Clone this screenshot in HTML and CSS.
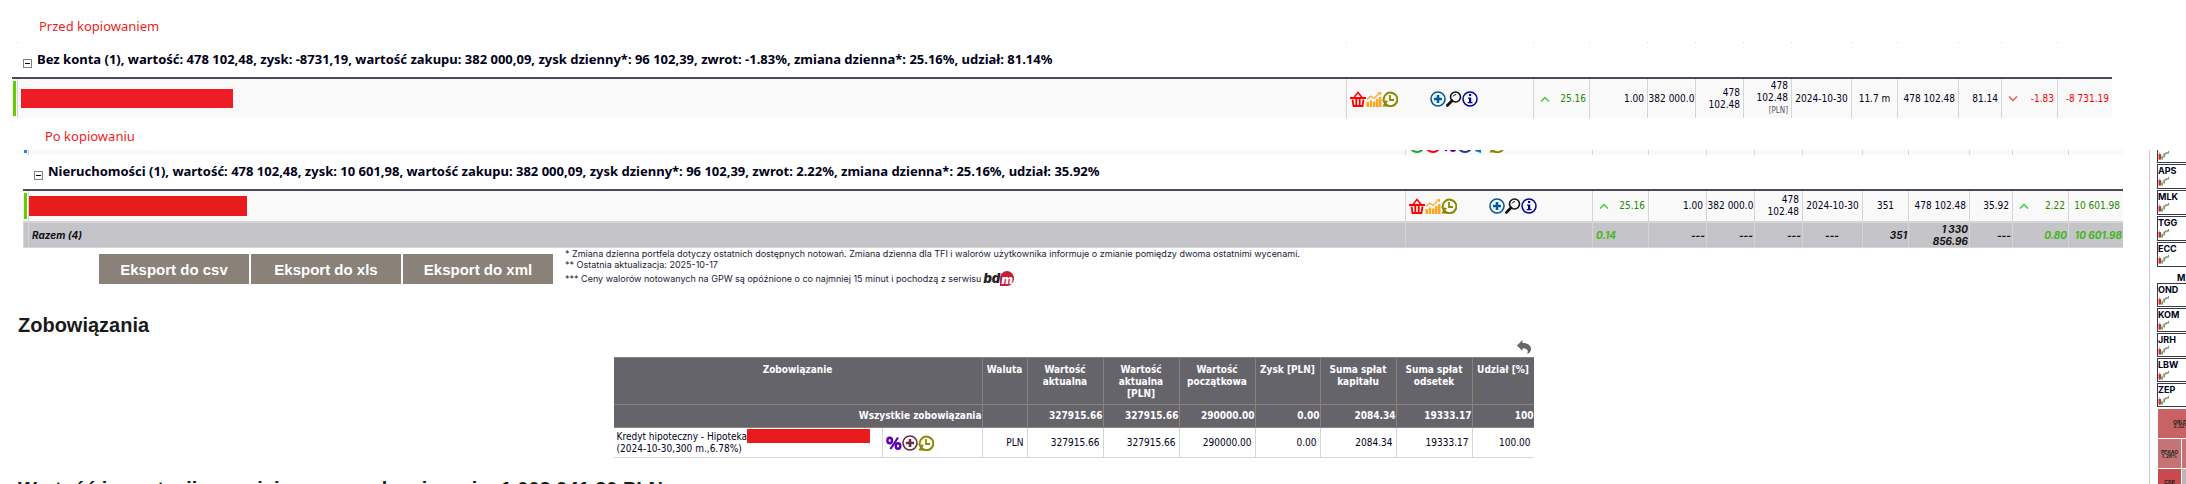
FILE: index.html
```html
<!DOCTYPE html>
<html lang="pl">
<head>
<meta charset="UTF-8">
<meta name="viewport" content="width=device-width, initial-scale=1.0">
<title>Portfel</title>
<link rel="stylesheet" href="styles.css">
</head>
<body>

<!-- Ikony -->
<svg class="sprite" aria-hidden="true">
    <symbol id="koszyk" viewBox="0 0 16 16">
        <path d="M3.500 7L8 1.500 12.500 7" fill="none" stroke="#f00" stroke-width="1.500"/>
        <path d="M0 6h16v2H0z" fill="#f00"/>
        <path d="M2.500 8.500l1 6.500h9l1-6.500M6.300 8v7M9.700 8v7" fill="none" stroke="#f00" stroke-width="1.800"/>
    </symbol>
    <symbol id="wykres" viewBox="0 0 16 16">
        <path d="M.5 11h2.500v5H.5zM3.700 9.500h2.500V16H3.700zM6.900 10.500h2.500V16H6.900zM10 8h2.500v8H10zM13 6h2.500v10H13z" fill="#ffa51f"/>
        <path d="M1 8.500L5 5l3 2.500 6-6" fill="none" stroke="#ffa51f" stroke-width="1.200"/>
        <path d="M11.500 1.200H15v3.300z" fill="#ffa51f"/>
    </symbol>
    <symbol id="zegar" viewBox="0 0 16 16">
        <path d="M4 13.500A6.800 6.800 0 1 0 1.800 9.500" fill="none" stroke="#8a8a00" stroke-width="2"/>
        <path d="M0 9l6 1-1.500 2L7 15.500H.5L2 12.500z" fill="#8a8a00"/>
        <path d="M8 4v5h4" fill="none" stroke="#8a8a00" stroke-width="1.800"/>
    </symbol>
    <symbol id="plus" viewBox="0 0 16 16">
        <circle cx="8" cy="8" r="7" fill="none" stroke="currentColor" stroke-width="1.600"/>
        <path d="M8 4v8M4 8h8" stroke="currentColor" stroke-width="2.600"/>
    </symbol>
    <symbol id="lupa" viewBox="0 0 16 16">
        <circle cx="9.500" cy="6" r="5" fill="none" stroke="#111" stroke-width="1.600"/>
        <path d="M7 5.500Q8 3.500 10 3.500" fill="none" stroke="#111" stroke-width="1"/>
        <path d="M6 9.800L1.300 14.500" stroke="#111" stroke-width="2.800" stroke-linecap="round"/>
    </symbol>
    <symbol id="info" viewBox="0 0 16 16">
        <circle cx="8" cy="8" r="7" fill="none" stroke="#00009c" stroke-width="1.500"/>
        <path d="M7 3h2.200v2H7zM6 6.500h3.200v4.500h1.300v1.300H5.800V11H7V7.700H6z" fill="#00009c"/>
    </symbol>
    <symbol id="kolo" viewBox="0 0 16 16">
        <circle cx="8" cy="8" r="7" fill="none" stroke="currentColor" stroke-width="2"/>
    </symbol>
    <symbol id="strzalka" viewBox="0 0 16 16">
        <path d="M2 14l6-10v12z" fill="currentColor"/>
    </symbol>
    <symbol id="procent" viewBox="0 0 16 16">
        <path d="M12 2.500L4.500 14" stroke="#5a00b4" stroke-width="2.200"/>
        <ellipse cx="3.700" cy="5.500" rx="2.300" ry="2.700" fill="none" stroke="#5a00b4" stroke-width="2.400"/>
        <ellipse cx="12" cy="11" rx="2.300" ry="2.700" fill="none" stroke="#5a00b4" stroke-width="2.400"/>
    </symbol>
    <symbol id="wzrost" viewBox="0 0 10 6">
        <path d="M1 5.500L5 1.500 9 5.500" fill="none" stroke="#3fcf3f" stroke-width="1.500"/>
    </symbol>
    <symbol id="spadek" viewBox="0 0 10 6">
        <path d="M1 .500L5 4.500 9 .500" fill="none" stroke="#d95f5f" stroke-width="1.500"/>
    </symbol>
    <symbol id="cofnij" viewBox="0 0 14 14">
        <path d="M5.500 0v3C11 3 14 5.500 14 9c0 2.500-1.500 4.300-4 5 1.500-2 1.500-5.800-4.500-5.800V11L0 5.500z" fill="#666"/>
    </symbol>
    <symbol id="swieczki" viewBox="0 0 12 11">
        <path d="M1.500 2v8M4 5v5" stroke="#999" stroke-width=".6"/>
        <path d="M.5 4H3V9.500H.5z" fill="#e32626"/>
        <path d="M3.300 6.500h1.700v3H3.300zM5.300 3.500h1.700v4H5.300zM10 1h1v2.500h-1z" fill="#4fae68"/>
        <path d="M7.200 2.500h1.300v2H7.200zM8.700 2h1v1.800h-1z" fill="#a55"/>
    </symbol>
</svg>

<section class="przed">
    <h2 class="opis">Przed kopiowaniem</h2>
    <table class="portfel">
        <colgroup>
            <col class="k-znak"><col><col class="k-ikony"><col class="k-zmiana"><col class="k-ilosc"><col class="k-cena"><col class="k-cena"><col class="k-cena"><col class="k-data"><col class="k-okres"><col class="k-wartosc"><col class="k-udzial"><col class="k-zmiana"><col class="k-zysk">
        </colgroup>
        <tr class="kreski"><td></td><td></td><td></td><td></td><td></td><td></td><td></td><td></td><td></td><td></td><td></td><td></td><td></td><td></td></tr>
    </table>
    <h3 class="grupa"><button class="zwin" aria-label="Zwiń"></button>Bez konta (1), wartość: 478 102,48, zysk: -8731,19, wartość zakupu: 382 000,09, zysk dzienny*: 96 102,39, zwrot: -1.83%, zmiana dzienna*: 25.16%, udział: 81.14%</h3>
    <table class="portfel">
        <colgroup>
            <col class="k-znak"><col><col class="k-ikony"><col class="k-zmiana"><col class="k-ilosc"><col class="k-cena"><col class="k-cena"><col class="k-cena"><col class="k-data"><col class="k-okres"><col class="k-wartosc"><col class="k-udzial"><col class="k-zmiana"><col class="k-zysk">
        </colgroup>
        <tr class="pozycja wysoka">
            <td class="znak"></td>
            <td class="nazwa"><div class="zakryte"></div></td>
            <td>
                <div class="ikony">
                    <svg><use href="#koszyk"/></svg><svg><use href="#wykres"/></svg><svg><use href="#zegar"/></svg>
                    <svg class="odstep niebieski"><use href="#plus"/></svg><svg><use href="#lupa"/></svg><svg><use href="#info"/></svg>
                </div>
            </td>
            <td><div class="zmiana zielony"><svg><use href="#wzrost"/></svg>25.16</div></td>
            <td>1.00</td>
            <td class="ciasny">382 000.0</td>
            <td>478 102.48</td>
            <td>478 102.48 <span class="waluta">[PLN]</span></td>
            <td class="srodek">2024-10-30</td>
            <td class="srodek">11.7 m</td>
            <td>478 102.48</td>
            <td>81.14</td>
            <td><div class="zmiana czerwony"><svg><use href="#spadek"/></svg>-1.83</div></td>
            <td class="czerwony">-8 731.19</td>
        </tr>
    </table>
</section>

<h2 class="opis opis-po">Po kopiowaniu</h2>

<div class="uklad">
    <main>
        <section class="po">
            <table class="portfel">
                <colgroup>
                    <col class="k-znak"><col><col class="k-ikony"><col class="k-zmiana"><col class="k-ilosc"><col class="k-cena"><col class="k-cena"><col class="k-data"><col class="k-okres"><col class="k-wartosc"><col class="k-udzial"><col class="k-zmiana"><col class="k-zysk">
                </colgroup>
                <tr class="skrawek">
                    <td class="znak"></td><td></td>
                    <td>
                        <div class="ikony">
                            <svg class="jasnozielony"><use href="#kolo"/></svg><svg class="czerwony"><use href="#kolo"/></svg><svg><use href="#procent"/></svg><svg class="granat"><use href="#kolo"/></svg><svg class="blekit"><use href="#strzalka"/></svg><svg><use href="#zegar"/></svg>
                        </div>
                    </td>
                    <td></td><td></td><td></td><td></td><td></td><td></td><td></td><td></td><td></td><td></td>
                </tr>
            </table>
            <h3 class="grupa"><button class="zwin" aria-label="Zwiń"></button>Nieruchomości (1), wartość: 478 102,48, zysk: 10 601,98, wartość zakupu: 382 000,09, zysk dzienny*: 96 102,39, zwrot: 2.22%, zmiana dzienna*: 25.16%, udział: 35.92%</h3>
            <table class="portfel">
                <colgroup>
                    <col class="k-znak"><col><col class="k-ikony"><col class="k-zmiana"><col class="k-ilosc"><col class="k-cena"><col class="k-cena"><col class="k-data"><col class="k-okres"><col class="k-wartosc"><col class="k-udzial"><col class="k-zmiana"><col class="k-zysk">
                </colgroup>
                <tr class="pozycja">
                    <td class="znak"></td>
                    <td class="nazwa"><div class="zakryte"></div></td>
                    <td>
                        <div class="ikony">
                            <svg><use href="#koszyk"/></svg><svg><use href="#wykres"/></svg><svg><use href="#zegar"/></svg>
                            <svg class="odstep niebieski"><use href="#plus"/></svg><svg><use href="#lupa"/></svg><svg><use href="#info"/></svg>
                        </div>
                    </td>
                    <td><div class="zmiana zielony"><svg><use href="#wzrost"/></svg>25.16</div></td>
                    <td>1.00</td>
                    <td class="ciasny">382 000.0</td>
                    <td>478 102.48</td>
                    <td class="srodek">2024-10-30</td>
                    <td class="srodek">351</td>
                    <td>478 102.48</td>
                    <td>35.92</td>
                    <td><div class="zmiana zielony"><svg><use href="#wzrost"/></svg>2.22</div></td>
                    <td class="zielony">10 601.98</td>
                </tr>
                <tr class="razem">
                    <td></td>
                    <td class="nazwa">Razem (4)</td>
                    <td></td>
                    <td class="lewo zysk">0.14</td>
                    <td>---</td>
                    <td>---</td>
                    <td>---</td>
                    <td class="srodek">---</td>
                    <td>351</td>
                    <td>1&nbsp;330 856.96</td>
                    <td>---</td>
                    <td class="zysk">0.80</td>
                    <td class="zysk">10 601.98</td>
                </tr>
            </table>
        </section>

        <div class="stopka">
            <div class="eksport">
                <button>Eksport do csv</button>
                <button>Eksport do xls</button>
                <button>Eksport do xml</button>
            </div>
            <div class="uwagi">
                <p>* Zmiana dzienna portfela dotyczy ostatnich dostępnych notowań. Zmiana dzienna dla TFI i walorów użytkownika informuje o zmianie pomiędzy dwoma ostatnimi wycenami.</p>
                <p>** Ostatnia aktualizacja: 2025-10-17</p>
                <p class="zrodlo">*** Ceny walorów notowanych na GPW są opóźnione o co najmniej 15 minut i pochodzą z serwisu <span class="bdm">bd<b>m</b></span></p>
            </div>
        </div>

        <h2 class="tytul">Zobowiązania</h2>

        <div class="zobowiazania">
            <button class="cofnij" aria-label="Cofnij"><svg><use href="#cofnij"/></svg></button>
            <table class="kredyty">
                <colgroup>
                    <col><col class="z-ikony"><col class="z-waluta"><col class="z-kwota"><col class="z-kwota"><col class="z-kwota"><col class="z-zysk"><col class="z-kwota"><col class="z-kwota"><col class="z-udzial">
                </colgroup>
                <thead>
                    <tr>
                        <th colspan="2">Zobowiązanie</th>
                        <th>Waluta</th>
                        <th>Wartość aktualna</th>
                        <th>Wartość aktualna [PLN]</th>
                        <th>Wartość początkowa</th>
                        <th>Zysk [PLN]</th>
                        <th>Suma spłat kapitału</th>
                        <th>Suma spłat odsetek</th>
                        <th>Udział [%]</th>
                    </tr>
                    <tr class="suma">
                        <td colspan="2">Wszystkie zobowiązania</td>
                        <td></td>
                        <td>327915.66</td>
                        <td>327915.66</td>
                        <td>290000.00</td>
                        <td>0.00</td>
                        <td>2084.34</td>
                        <td>19333.17</td>
                        <td>100</td>
                    </tr>
                </thead>
                <tbody>
                    <tr>
                        <td class="kredyt">
                            <div class="kredyt-nazwa">Kredyt hipoteczny - Hipoteka<div class="zakryte"></div></div>
                            (2024-10-30,300 m.,6.78%)
                        </td>
                        <td>
                            <div class="ikony">
                                <svg><use href="#procent"/></svg><svg class="bordo"><use href="#plus"/></svg><svg><use href="#zegar"/></svg>
                            </div>
                        </td>
                        <td>PLN</td>
                        <td>327915.66</td>
                        <td>327915.66</td>
                        <td>290000.00</td>
                        <td>0.00</td>
                        <td>2084.34</td>
                        <td>19333.17</td>
                        <td>100.00</td>
                    </tr>
                </tbody>
            </table>
        </div>

        <h2 class="tytul podsumowanie">Wartość inwestycji pomniejszona o zobowiązania: 1 002 941.30 PLN</h2>
    </main>

    <aside class="pasek">
        <div class="spolki">
            <div class="spolka ucieta"><svg><use href="#swieczki"/></svg></div>
            <div class="spolka">APS<svg><use href="#swieczki"/></svg></div>
            <div class="spolka">MLK<svg><use href="#swieczki"/></svg></div>
            <div class="spolka">TGG<svg><use href="#swieczki"/></svg></div>
            <div class="spolka">ECC<svg><use href="#swieczki"/></svg></div>
        </div>
        <div class="pasek-tytul">M</div>
        <div class="spolki niskie">
            <div class="spolka">OND<svg><use href="#swieczki"/></svg></div>
            <div class="spolka">KOM<svg><use href="#swieczki"/></svg></div>
            <div class="spolka">JRH<svg><use href="#swieczki"/></svg></div>
            <div class="spolka">LBW<svg><use href="#swieczki"/></svg></div>
            <div class="spolka">ZEP<svg><use href="#swieczki"/></svg></div>
        </div>
        <div class="mapa">
            <div class="pole szerokie">ORLEN<br>2.32%</div>
            <div class="pole jasne">PEKAO<br>1.28%</div>
            <div class="pole jasne"></div>
            <div class="pole ciemne">CDR<br>3.07%</div>
            <div class="pole szare"></div>
        </div>
    </aside>
</div>

</body>
</html>
```

FILE: styles.css
```css
* {
    box-sizing: border-box;
}
body {
    margin: 0;
    height: 100vh;
    overflow: hidden;
    background-color: #fff;
    color: #000018;
    font-family: "DejaVu Sans Condensed", "DejaVu Sans", sans-serif;
    font-stretch: condensed;
    font-size: 10px;
    line-height: 12px;
}
button {
    border: none;
    padding: 0;
    cursor: pointer;
}
.sprite {
    display: none;
}

/* Podpisy */
.opis {
    margin: 0;
    padding: 17px 0 7px 39px;
    color: #ee1c24;
    font-family: "Noto Sans", sans-serif;
    font-stretch: normal;
    font-weight: normal;
    font-size: 13px;
    line-height: 18px;
}
.opis-po {
    padding: 9px 0 5px 45px;
}

/* Tabele portfela */
.przed {
    margin: 0 74px 0 12px;
}
.przed .opis {
    padding-left: 27px;
}
.po {
    margin: 0 26px 0 23px;
}
.grupa {
    display: flex;
    align-items: flex-end;
    gap: 5px;
    height: 36px;
    margin: 0;
    padding: 0 0 9px 11px;
    border-bottom: 2px solid #4c4a58;
    font-family: "Noto Sans", sans-serif;
    font-stretch: normal;
    font-weight: bold;
    font-size: 13px;
    line-height: 18px;
    white-space: nowrap;
}
.zwin {
    width: 9px;
    height: 9px;
    border: 1px solid #808080;
    background: linear-gradient(#000, #000) center / 5px 1px no-repeat #fff;
}
.portfel {
    width: 100%;
    table-layout: fixed;
    border-collapse: separate;
    border-spacing: 0;
}
.k-znak { width: 5px; }
.k-ikony { width: 187px; }
.k-zmiana { width: 56px; }
.k-ilosc { width: 58px; }
.k-cena { width: 48px; }
.k-data { width: 60px; }
.k-okres { width: 46px; }
.k-wartosc { width: 61px; }
.k-udzial { width: 43px; }
.k-zysk { width: 55px; }

.portfel td {
    padding: 0 3px;
    border-left: 1px solid #d5d5d5;
    text-align: right;
    vertical-align: middle;
}
.portfel td:first-child {
    border-left: none;
}
.portfel .kreski td {
    height: 1px;
    padding: 0;
}
.pozycja,
.skrawek {
    background-color: #f9f9f9;
}
.pozycja td {
    height: 30px;
}
.wysoka td {
    height: 39px;
}
.portfel .znak {
    padding: 2px 1px;
    background-color: #66cc00;
    background-clip: content-box;
}
.portfel .ciasny {
    padding: 0;
    text-align: center;
    white-space: nowrap;
}
.portfel .srodek {
    padding: 0;
    text-align: center;
}
.portfel .lewo {
    text-align: left;
}
.zakryte {
    width: 212px;
    height: 19px;
    background-color: #ee1c24;
}
.po .zakryte {
    width: 218px;
    height: 20px;
    background-color: #e81c1c;
}
.po .pozycja .nazwa {
    padding-left: 0;
}
.waluta {
    color: #555566;
    font-size: 8px;
}
.ikony {
    display: flex;
}
.ikony svg {
    width: 16px;
    height: 16px;
}
.ikony .odstep {
    margin-left: 32px;
}
.zmiana {
    display: flex;
    justify-content: space-between;
    align-items: center;
    padding-left: 3px;
}
.zmiana svg {
    width: 10px;
    height: 6px;
}
.zielony { color: #1f8a00; }
.czerwony { color: #ff0000; }
.niebieski { color: #005b9f; }
.bordo { color: #6b2b45; }
.jasnozielony { color: #1fa51f; }
.granat { color: #1f3a93; }
.blekit { color: #0a6fd8; }

/* Dolny fragment poprzedniego wiersza */
.skrawek td {
    height: 5px;
    vertical-align: top;
}
.portfel .skrawek .znak {
    padding: 0 1px 2px;
    background-color: #1c86ee;
}
.skrawek .ikony {
    height: 3px;
    overflow: hidden;
    align-items: flex-end;
}
.skrawek .ikony svg {
    flex: none;
}

.razem {
    background-color: #c5c4c9;
    color: #111;
    font-family: Inter, sans-serif;
    font-stretch: normal;
    font-style: italic;
    font-weight: bold;
}
.portfel .razem td {
    height: 27px;
    padding-right: 1px;
    border-top: 2px solid #d5d5d5;
    border-bottom: 1px solid #d5d5d5;
}
.portfel .razem td:first-child {
    border-left: 1px solid #d5d5d5;
}
.portfel .razem .nazwa {
    text-align: left;
}
.razem .zysk {
    color: #42b51c;
}

/* Eksport i uwagi */
.stopka {
    display: flex;
    gap: 12px;
    margin-left: 99px;
}
.eksport {
    display: flex;
    gap: 2px;
    padding-top: 6px;
}
.eksport button {
    width: 150px;
    height: 30px;
    background-color: #8a8178;
    color: #fff;
    font-family: "Liberation Sans", Arial, sans-serif;
    font-stretch: normal;
    font-weight: bold;
    font-size: 15px;
}
.uwagi {
    font-family: Inter, sans-serif;
    font-stretch: normal;
    font-size: 9px;
    line-height: 11px;
    color: #222233;
}
.uwagi p {
    margin: 0;
}
.uwagi .zrodlo {
    display: flex;
    align-items: center;
    gap: 2px;
    height: 16px;
}
.bdm {
    display: flex;
    align-items: center;
    color: #222;
    font-size: 13px;
    font-weight: 900;
    font-style: italic;
}
.bdm b {
    width: 14px;
    height: 15px;
    border-radius: 50% 50% 50% 0;
    background-color: #c41e3a;
    color: #fff;
    font-size: 12px;
    line-height: 17px;
    text-align: center;
}

/* Zobowiązania */
.tytul {
    margin: 27px 0 0 18px;
    color: #1a1a1a;
    font-family: "Liberation Sans", Arial, sans-serif;
    font-stretch: normal;
    font-size: 20px;
    line-height: 24px;
    white-space: nowrap;
}
.podsumowanie {
    margin-top: 19px;
}
.zobowiazania {
    width: 920px;
    margin: 3px auto 0;
}
.cofnij {
    display: block;
    margin: 0 3px 3px auto;
    background: none;
}
.cofnij svg {
    display: block;
    width: 14px;
    height: 14px;
}
.kredyty {
    width: 100%;
    table-layout: fixed;
    border-collapse: separate;
    border-spacing: 0;
}
.z-ikony { width: 100px; }
.z-waluta { width: 45px; }
.z-kwota { width: 76px; }
.z-zysk { width: 65px; }
.z-udzial { width: 62px; }

.kredyty thead {
    background-color: #65646b;
    color: #fff;
    font-weight: bold;
}
.kredyty th {
    height: 47px;
    padding: 6px 2px 0;
    border-top: 1px solid #8a8178;
    border-left: 1px solid #8a8178;
    vertical-align: top;
}
.kredyty td {
    padding: 0 3px;
    border-left: 1px solid #d5d5d5;
    border-bottom: 1px solid #d5d5d5;
    text-align: right;
}
.kredyty .suma td {
    height: 24px;
    padding: 0;
    border-color: #8a8178;
    border-top: 1px solid #8a8178;
}
.kredyty tr > :first-child {
    border-left: none;
}
.kredyty tbody td {
    height: 30px;
}
.kredyty .kredyt {
    text-align: left;
    white-space: nowrap;
}
.kredyt-nazwa {
    display: flex;
}
.kredyt .zakryte {
    width: 123px;
    height: 14px;
    margin: -2px 0 0;
    background-color: #e81c1c;
}

/* Pasek boczny */
.uklad {
    display: flex;
}
main {
    flex: 1;
    min-width: 0;
    padding-right: 2px;
}
main .po {
    margin-right: 24px;
}
.pasek {
    width: 37px;
    height: 334px;
    padding-left: 7px;
    border-left: 1px solid #ccc;
    overflow: hidden;
    font-family: Inter, sans-serif;
    font-stretch: normal;
    font-size: 9px;
    font-weight: bold;
    line-height: 11px;
}
.spolki {
    display: flex;
    flex-direction: column;
    gap: 1px;
    width: 80px;
}
.spolka {
    height: 25px;
    border: 1px solid #3c3a48;
}
.spolka svg {
    display: block;
    width: 12px;
    height: 11px;
}
.ucieta {
    height: 13px;
    border-top: none;
}
.niskie .spolka {
    height: 24px;
}
.pasek-tytul {
    padding: 5px 0 0 20px;
    line-height: 11px;
}
.mapa {
    display: grid;
    grid-template-columns: 23px 23px;
    grid-template-rows: 29px 29px 29px;
    gap: 1px;
    margin: 2px 0 0 1px;
    color: #222;
    font-size: 5px;
    line-height: 4px;
    text-align: center;
}
.pole {
    display: grid;
    place-content: center;
}
.szerokie {
    grid-column: span 2;
    background-color: #c86265;
}
.jasne { background-color: #c67376; }
.ciemne { background-color: #c84a4d; }
.szare { background-color: #bbb5b8; }
```
